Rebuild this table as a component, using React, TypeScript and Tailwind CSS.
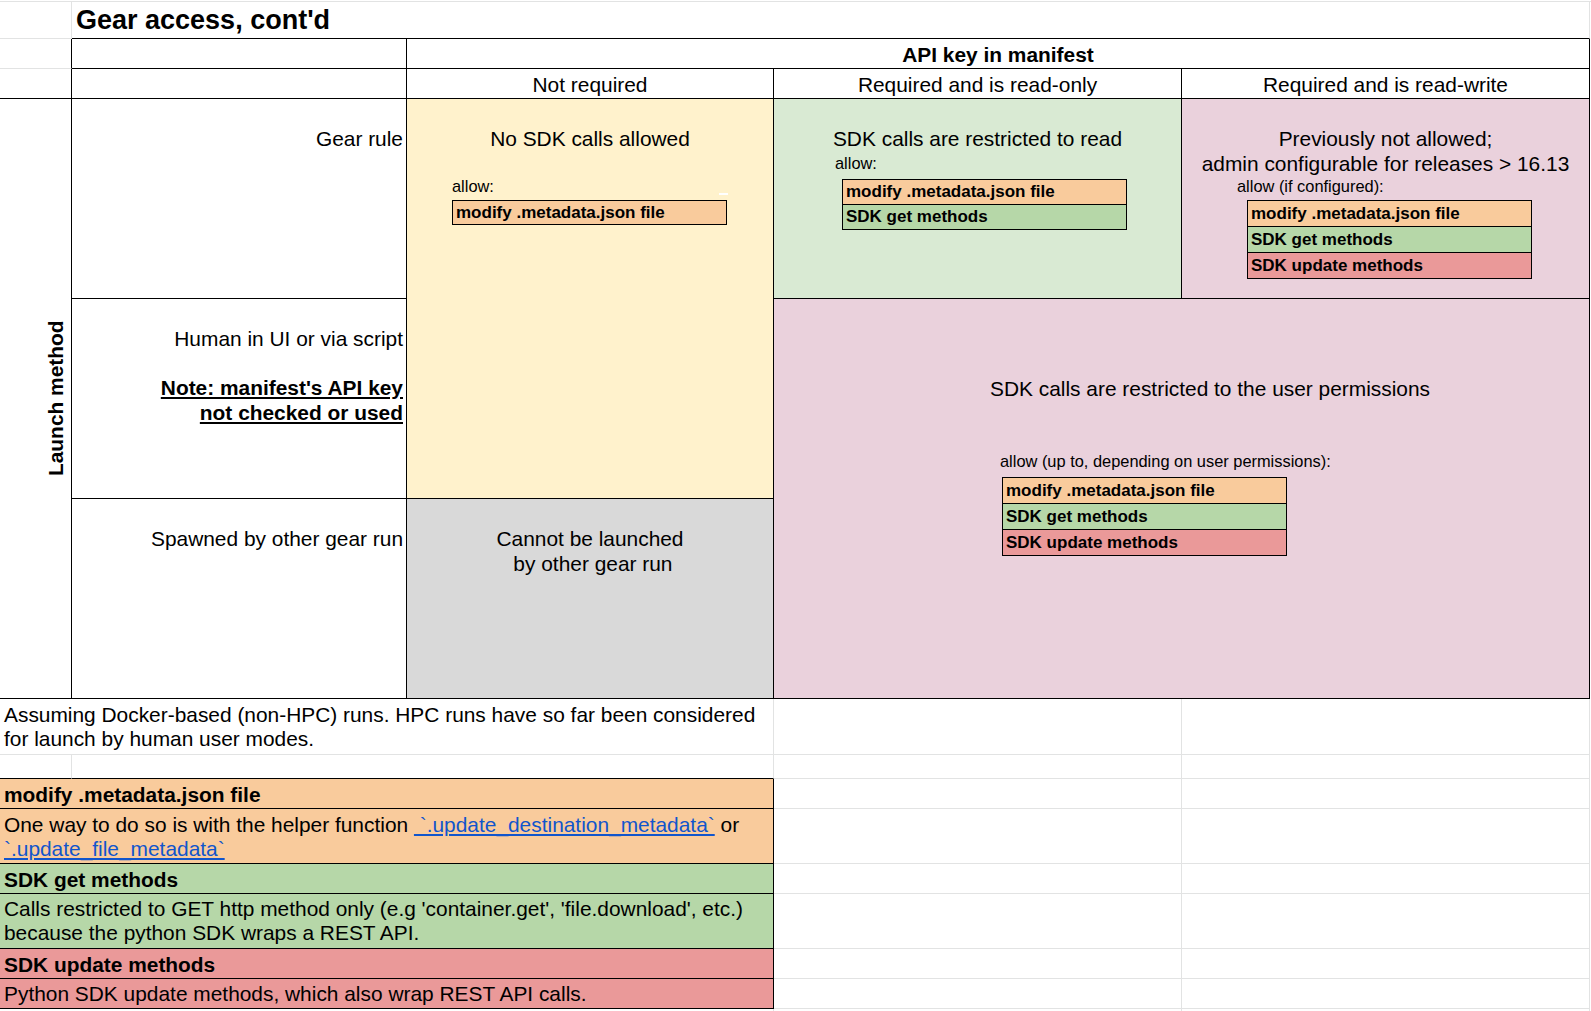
import React from "react";

type Item = { label: string; bg: string };

const META: Item = { label: "modify .metadata.json file", bg: "bg-[#f9cb9c]" };
const GET: Item = { label: "SDK get methods", bg: "bg-[#b6d7a8]" };
const UPD: Item = { label: "SDK update methods", bg: "bg-[#ea9999]" };

function AllowBox({
  items,
  widthClass,
  rowClass,
  lastRowClass,
  className,
}: {
  items: Item[];
  widthClass: string;
  rowClass: string;
  lastRowClass: string;
  className?: string;
}) {
  return (
    <div className={`border border-black ${widthClass} ${className ?? ""}`}>
      {items.map((it, i) => (
        <div
          key={it.label}
          className={`${it.bg} pl-[3px] text-[17px] font-bold whitespace-nowrap ${
            i < items.length - 1 ? `border-b border-black ${rowClass}` : lastRowClass
          }`}
        >
          {it.label}
        </div>
      ))}
    </div>
  );
}

const Link = ({ children }: { children: React.ReactNode }) => (
  <span className="text-[#1155cc] underline">{children}</span>
);

export default function App() {
  return (
    <div className="w-[1591px] h-[1011px] overflow-hidden bg-white pt-px font-['Liberation_Sans',Arial,sans-serif] text-[20.9px] leading-[24.5px] text-black">
      <div className="grid h-[1010px] border-t border-[#e2e3e3] grid-cols-[72px_335px_367px_408px_408px_1fr] grid-rows-[37px_30px_30px_200px_200px_200px_56px_24px_30px_55px_30px_55px_30px_30px_1fr]">
        {/* Row 1 */}
        <div className="col-start-1 row-start-1 border-r border-b border-[#e2e3e3]" />
        <div className="col-start-2 col-span-4 row-start-1 border-r border-b border-r-[#e2e3e3] border-b-black pl-[4px] pt-[2px] text-[27px] leading-[32px] font-bold whitespace-nowrap">
          Gear access, cont'd
        </div>

        {/* Row 2 */}
        <div className="col-start-1 row-start-2 border-r border-b border-r-black border-b-[#e2e3e3]" />
        <div className="col-start-2 row-start-2 border-r border-b border-black" />
        <div className="col-start-3 col-span-3 row-start-2 border-r border-b border-black flex items-end justify-center pb-[1px] font-bold">
          API key in manifest
        </div>

        {/* Row 3 */}
        <div className="col-start-1 row-start-3 border-r border-b border-black" />
        <div className="col-start-2 row-start-3 border-r border-b border-black" />
        <div className="col-start-3 row-start-3 border-r border-b border-black flex items-end justify-center pb-[1px]">
          Not required
        </div>
        <div className="col-start-4 row-start-3 border-r border-b border-black flex items-end justify-center pb-[1px]">
          Required and is read-only
        </div>
        <div className="col-start-5 row-start-3 border-r border-b border-black flex items-end justify-center pb-[1px]">
          Required and is read-write
        </div>

        {/* Rows 4-6 */}
        <div className="col-start-1 row-start-4 row-span-3 border-r border-b border-black flex items-center justify-center pl-[41px]">
          <span className="-rotate-90 whitespace-nowrap shrink-0 font-bold">Launch method</span>
        </div>

        <div className="col-start-2 row-start-4 border-r border-b border-black text-right pr-[3px] pt-[28px]">
          Gear rule
        </div>

        <div className="col-start-3 row-start-4 row-span-2 border-r border-b border-black bg-[#fff2cc] pt-[28px]">
          <div className="text-center">No SDK calls allowed</div>
          <div className="relative ml-[45px] mt-[25px]">
            <div className="text-[16.4px] leading-[18px]">allow:</div>
            <AllowBox
              items={[META]}
              widthClass="w-[275px]"
              rowClass="h-[23px] leading-[23px]"
              lastRowClass="h-[23px] leading-[23px]"
              className="mt-[5px]"
            />
            <div className="absolute left-[267px] top-[16px] w-[9px] h-[2px] bg-white" />
          </div>
        </div>

        <div className="col-start-4 row-start-4 border-r border-b border-black bg-[#d9ead3] pt-[28px]">
          <div className="text-center">SDK calls are restricted to read</div>
          <div className="ml-[61px] mt-[2px]">
            <div className="text-[16.4px] leading-[18px]">allow:</div>
            <AllowBox
              items={[META, GET]}
              widthClass="w-[285px]"
              rowClass="h-[25px] leading-[24px]"
              lastRowClass="h-[24px] leading-[24px]"
              className="ml-[7px] mt-[7px]"
            />
          </div>
        </div>

        <div className="col-start-5 row-start-4 border-r border-b border-black bg-[#ead1dc] pt-[28px]">
          <div className="text-center whitespace-nowrap">
            Previously not allowed;
            <br />
            admin configurable for releases &gt; 16.13
          </div>
          <div className="ml-[55px] mt-[1px]">
            <div className="text-[16.4px] leading-[18px]">allow (if configured):</div>
            <AllowBox
              items={[META, GET, UPD]}
              widthClass="w-[285px]"
              rowClass="h-[26px] leading-[25px]"
              lastRowClass="h-[25px] leading-[25px]"
              className="ml-[10px] mt-[5px]"
            />
          </div>
        </div>

        <div className="col-start-2 row-start-5 border-r border-b border-black text-right pr-[3px] pt-[28px] whitespace-nowrap">
          Human in UI or via script
          <br />
          <br />
          <span className="font-bold underline">
            Note: manifest's API key
            <br />
            not checked or used
          </span>
        </div>

        <div className="col-start-4 col-span-2 row-start-5 row-span-2 border-r border-b border-black bg-[#ead1dc] pt-[78px]">
          <div className="pl-[216px] whitespace-nowrap">SDK calls are restricted to the user permissions</div>
          <div className="ml-[226px] mt-[50px]">
            <div className="text-[16.4px] leading-[18px] whitespace-nowrap">
              allow (up to, depending on user permissions):
            </div>
            <AllowBox
              items={[META, GET, UPD]}
              widthClass="w-[285px]"
              rowClass="h-[26px] leading-[25px]"
              lastRowClass="h-[25px] leading-[25px]"
              className="ml-[2px] mt-[7px]"
            />
          </div>
        </div>

        <div className="col-start-2 row-start-6 border-r border-b border-black text-right pr-[3px] pt-[28px]">
          Spawned by other gear run
        </div>

        <div className="col-start-3 row-start-6 border-r border-b border-black bg-[#d9d9d9] text-center pt-[28px] whitespace-pre">
          {"Cannot be launched\n by other gear run"}
        </div>

        {/* Row 7 */}
        <div className="col-start-1 col-span-3 row-start-7 border-r border-b border-[#e2e3e3] flex flex-col justify-end pl-[4px] pb-[3px] leading-[24px] whitespace-nowrap">
          <span>Assuming Docker-based (non-HPC) runs. HPC runs have so far been considered</span>
          <span>for launch by human user modes.</span>
        </div>
        <div className="col-start-4 row-start-7 border-r border-b border-[#e2e3e3]" />
        <div className="col-start-5 row-start-7 border-r border-b border-[#e2e3e3]" />

        {/* Row 8 */}
        <div className="col-start-1 row-start-8 border-r border-b border-r-[#e2e3e3] border-b-black" />
        <div className="col-start-2 col-span-2 row-start-8 border-r border-b border-r-[#e2e3e3] border-b-black" />
        <div className="col-start-4 row-start-8 border-r border-b border-[#e2e3e3]" />
        <div className="col-start-5 row-start-8 border-r border-b border-[#e2e3e3]" />

        {/* Row 9 */}
        <div className="col-start-1 col-span-3 row-start-9 border-r border-b border-black bg-[#f9cb9c] flex items-end pl-[4px] pb-[1px] leading-[24px] font-bold">
          modify .metadata.json file
        </div>
        <div className="col-start-4 row-start-9 border-r border-b border-[#e2e3e3]" />
        <div className="col-start-5 row-start-9 border-r border-b border-[#e2e3e3]" />

        {/* Row 10 */}
        <div className="col-start-1 col-span-3 row-start-10 border-r border-b border-black bg-[#f9cb9c] flex flex-col justify-end pl-[4px] pb-[2px] leading-[24px]">
          <span className="whitespace-pre">
            {"One way to do so is with the helper function "}
            <Link>{" `.update_destination_metadata`"}</Link>
            {" or"}
          </span>
          <span className="whitespace-pre">
            <Link>{"`.update_file_metadata`"}</Link>
          </span>
        </div>
        <div className="col-start-4 row-start-10 border-r border-b border-[#e2e3e3]" />
        <div className="col-start-5 row-start-10 border-r border-b border-[#e2e3e3]" />

        {/* Row 11 */}
        <div className="col-start-1 col-span-3 row-start-11 border-r border-b border-black bg-[#b6d7a8] flex items-end pl-[4px] pb-[1px] leading-[24px] font-bold">
          SDK get methods
        </div>
        <div className="col-start-4 row-start-11 border-r border-b border-[#e2e3e3]" />
        <div className="col-start-5 row-start-11 border-r border-b border-[#e2e3e3]" />

        {/* Row 12 */}
        <div className="col-start-1 col-span-3 row-start-12 border-r border-b border-black bg-[#b6d7a8] flex flex-col justify-end pl-[4px] pb-[3px] leading-[24px] whitespace-nowrap">
          <span>Calls restricted to GET http method only (e.g 'container.get', 'file.download', etc.)</span>
          <span>because the python SDK wraps a REST API.</span>
        </div>
        <div className="col-start-4 row-start-12 border-r border-b border-[#e2e3e3]" />
        <div className="col-start-5 row-start-12 border-r border-b border-[#e2e3e3]" />

        {/* Row 13 */}
        <div className="col-start-1 col-span-3 row-start-13 border-r border-b border-black bg-[#ea9999] flex items-end pl-[4px] pb-[1px] leading-[24px] font-bold">
          SDK update methods
        </div>
        <div className="col-start-4 row-start-13 border-r border-b border-[#e2e3e3]" />
        <div className="col-start-5 row-start-13 border-r border-b border-[#e2e3e3]" />

        {/* Row 14 */}
        <div className="col-start-1 col-span-3 row-start-14 border-r border-b border-black bg-[#ea9999] flex items-end pl-[4px] pb-[2px] leading-[24px]">
          Python SDK update methods, which also wrap REST API calls.
        </div>
        <div className="col-start-4 row-start-14 border-r border-b border-[#e2e3e3]" />
        <div className="col-start-5 row-start-14 border-r border-b border-[#e2e3e3]" />

        {/* Row 15 */}
        <div className="col-start-1 col-span-3 row-start-15 border-r border-[#e2e3e3]" />
        <div className="col-start-4 row-start-15 border-r border-[#e2e3e3]" />
        <div className="col-start-5 row-start-15 border-r border-[#e2e3e3]" />
      </div>
    </div>
  );
}
